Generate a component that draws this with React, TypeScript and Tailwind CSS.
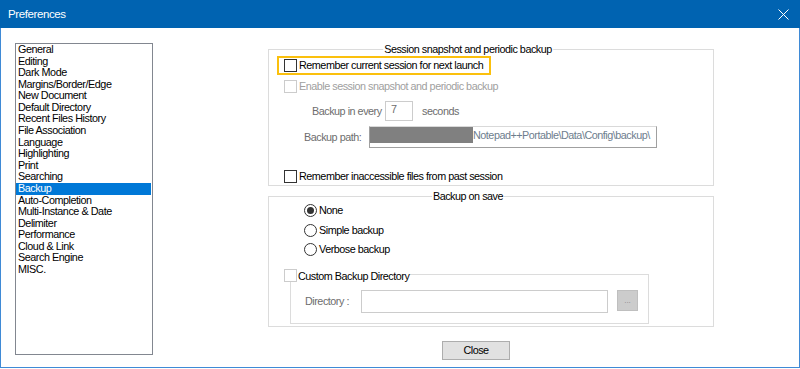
import React from "react";

const items = [
  "General",
  "Editing",
  "Dark Mode",
  "Margins/Border/Edge",
  "New Document",
  "Default Directory",
  "Recent Files History",
  "File Association",
  "Language",
  "Highlighting",
  "Print",
  "Searching",
  "Backup",
  "Auto-Completion",
  "Multi-Instance & Date",
  "Delimiter",
  "Performance",
  "Cloud & Link",
  "Search Engine",
  "MISC.",
];

function Check({ disabled }: { disabled?: boolean }) {
  return (
    <span
      className={`inline-block w-[13px] h-[13px] shrink-0 border bg-white ${
        disabled ? "border-[#cccccc]" : "border-[#333333]"
      }`}
    />
  );
}

function Radio({ checked }: { checked?: boolean }) {
  return (
    <span className="w-[13px] h-[13px] shrink-0 rounded-full border border-[#333333] bg-white flex items-center justify-center">
      {checked && <span className="w-[7px] h-[7px] rounded-full bg-[#333333]" />}
    </span>
  );
}

export default function App() {
  return (
    <div
      className="w-[800px] h-[368px] bg-white border-x border-b border-[#3f8ad6] flex flex-col text-black"
      style={{ fontFamily: '"Liberation Sans", Arial, sans-serif' }}
    >
      <div className="h-[28px] -mx-px bg-[#0063b1] flex items-center justify-between pl-[8px] pr-[11px] text-white shrink-0">
        <span className="text-[11.5px] tracking-[-0.4px] mt-[2px]">Preferences</span>
        <svg width="11" height="11" viewBox="0 0 11 11" className="mt-[1px]">
          <path d="M0.5 0.5 L10.5 10.5 M10.5 0.5 L0.5 10.5" stroke="white" strokeWidth="1" />
        </svg>
      </div>
      <div className="flex pt-[15px]">
        <div className="ml-[14px] w-[138px] h-[312px] border border-[#828790] text-[10.8px] tracking-[-0.45px]">
          {items.map((it) => (
            <div
              key={it}
              className={`h-[11.58px] leading-[11.58px] pl-[2px] whitespace-nowrap ${
                it === "Backup" ? "bg-[#0078d7] text-white mr-[1px]" : ""
              }`}
            >
              {it}
            </div>
          ))}
        </div>
        <div className="ml-[115px] mt-[6px] w-[446px] flex flex-col text-[10.8px] tracking-[-0.48px]">
          {/* Group 1 */}
          <div className="relative border border-[#dcdcdc] h-[137px] pt-[6px] pl-[8px]">
            <span className="absolute -top-[7px] left-[199px] -translate-x-1/2 bg-white px-[1px] leading-[12px] whitespace-nowrap">
              Session snapshot and periodic backup
            </span>
            <div className="w-[214px] h-[19px] border-2 border-[#fbc00d] flex items-center pl-[5px]">
              <Check />
              <span className="ml-[2px] whitespace-nowrap">Remember current session for next launch</span>
            </div>
            <div className="flex items-center ml-[7px] mt-[5px] h-[13px] text-[#a0a0a0]">
              <Check disabled />
              <span className="ml-[2px]">Enable session snapshot and periodic backup</span>
            </div>
            <div className="flex items-center ml-[35px] mt-[8px] h-[20px] text-[#6d6d6d]">
              <span className="w-[73px]">Backup in every</span>
              <span className="w-[28px] h-[20px] border border-[#cccccc] pl-[5px] leading-[15px] text-[#6d6d6d]">
                7
              </span>
              <span className="ml-[9px]">seconds</span>
            </div>
            <div className="flex items-center ml-[27px] mt-[5px] h-[22px] text-[#6d6d6d]">
              <span className="w-[65px]">Backup path:</span>
              <div className="w-[288px] h-[22px] border-l border-b border-r border-[#a0a0a0] border-t-[#d9d9d9] border-t flex items-start">
                <span className="w-[103px] h-[16px] bg-[#808080] shrink-0" />
                <span className="leading-[16px] whitespace-nowrap text-[#6d7d8d]">
                  Notepad++Portable\Data\Config\backup\
                </span>
              </div>
            </div>
            <div className="flex items-center ml-[7px] mt-[22px] h-[13px]">
              <Check />
              <span className="ml-[2px]">Remember inaccessible files from past session</span>
            </div>
          </div>
          {/* Group 2 */}
          <div className="relative mt-[10px] border border-[#dcdcdc] h-[131px] pt-[7px]">
            <span className="absolute -top-[7px] left-[199px] -translate-x-1/2 bg-white px-[1px] leading-[12px] whitespace-nowrap">
              Backup on save
            </span>
            <div className="flex items-center ml-[35px] h-[13px]">
              <Radio checked />
              <span className="ml-[2px]">None</span>
            </div>
            <div className="flex items-center ml-[35px] mt-[7px] h-[13px]">
              <Radio />
              <span className="ml-[2px]">Simple backup</span>
            </div>
            <div className="flex items-center ml-[35px] mt-[6px] h-[13px]">
              <Radio />
              <span className="ml-[2px]">Verbose backup</span>
            </div>
            <div className="relative ml-[21px] mt-[18px] w-[359px] h-[50px] border border-[#dcdcdc] pt-[15px] pl-[14px] flex items-start">
              <div className="absolute -top-[6px] -left-[7px] flex items-center bg-white pr-[1px]">
                <Check disabled />
                <span className="ml-[1px] leading-[12px]">Custom Backup Directory</span>
              </div>
              <span className="text-[#6d6d6d] leading-[22px] w-[56px]">Directory :</span>
              <span className="w-[247px] h-[23px] border border-[#cccccc]" />
              <span className="ml-[9px] w-[21px] h-[21px] bg-[#cccccc] border border-[#bfbfbf] flex items-center justify-center text-[8px] text-[#8a8a8a] leading-none tracking-normal">
                ...
              </span>
            </div>
          </div>
          <div className="mt-[14px] ml-[174px] w-[68px] h-[19px] bg-[#e1e1e1] border border-[#adadad] flex items-center justify-center">
            Close
          </div>
        </div>
      </div>
    </div>
  );
}
